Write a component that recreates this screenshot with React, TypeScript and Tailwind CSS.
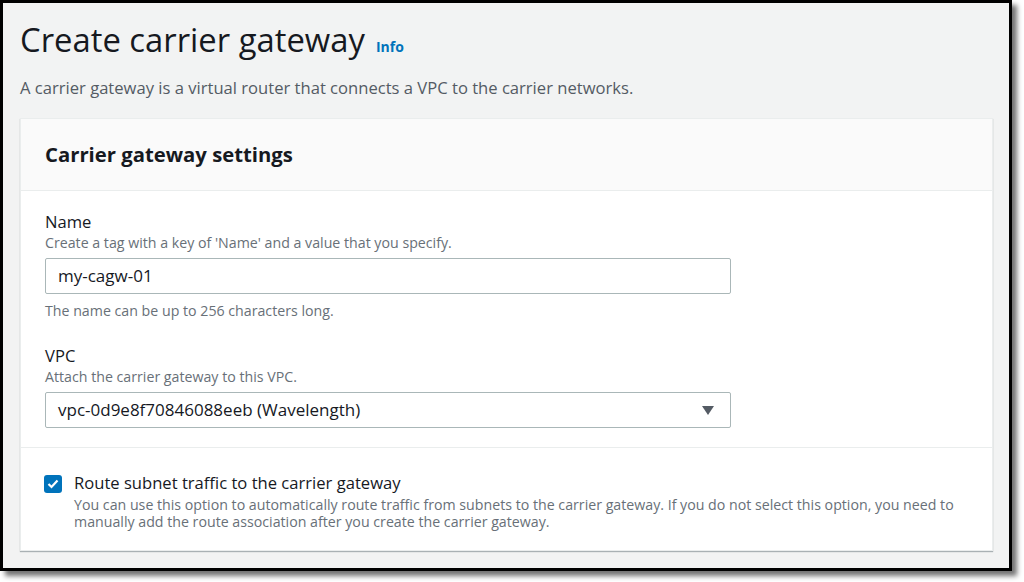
import React from "react";

export default function App() {
  return (
    <div className="w-[1024px] h-[582px] bg-white overflow-hidden" style={{ fontFamily: '"Open Sans", "Noto Sans", sans-serif' }}>
      <div className="w-[1012px] h-[571px] border-[3px] border-black bg-[#f2f3f3] shadow-[5px_5px_5px_rgba(0,0,0,0.55)] flex flex-col px-[17px] pt-[17px]">
        <div className="flex items-baseline gap-[11px]">
          <h1 className="text-[32.8px] leading-[40px] text-[#16191f] font-normal">Create carrier gateway</h1>
          <a className="text-[14px] font-bold text-[#0073bb]">Info</a>
        </div>
        <p className="mt-[17px] text-[16.6px] leading-[22px] text-[#545b64]">
          A carrier gateway is a virtual router that connects a VPC to the carrier networks.
        </p>
        <div className="mt-[19px] w-[973px] bg-white border border-[#eaeded] shadow-[0_1px_1px_0_rgba(0,28,36,0.3)] flex flex-col">
          <div className="h-[72px] bg-[#fafafa] border-b border-[#eaeded] flex items-center px-[24px]">
            <h2 className="text-[20.3px] font-bold text-[#16191f]">Carrier gateway settings</h2>
          </div>
          <div className="px-[24px] pt-[20px] pb-[19px] flex flex-col">
            <div className="text-[16.6px] leading-[22px] text-[#16191f]">Name</div>
            <div className="text-[14.2px] leading-[20px] text-[#687078]">Create a tag with a key of 'Name' and a value that you specify.</div>
            <div className="mt-[5px] w-[686px] h-[36px] border border-[#aab7b8] rounded-[2px] flex items-center px-[12px] text-[17px] text-[#16191f]">my-cagw-01</div>
            <div className="mt-[7px] text-[14.2px] leading-[20px] text-[#687078]">The name can be up to 256 characters long.</div>
            <div className="mt-[24px] text-[16.6px] leading-[22px] text-[#16191f]">VPC</div>
            <div className="text-[14.2px] leading-[20px] text-[#687078]">Attach the carrier gateway to this VPC.</div>
            <div className="mt-[5px] w-[686px] h-[36px] border border-[#aab7b8] rounded-[2px] flex items-center justify-between pl-[12px] pr-[16px] text-[17px] text-[#16191f]">
              <span>vpc-0d9e8f70846088eeb (Wavelength)</span>
              <svg width="12" height="9" viewBox="0 0 12 9"><path d="M0 0 H12 L6 9 Z" fill="#545b64" /></svg>
            </div>
          </div>
          <div className="border-t border-[#eaeded] px-[23px] pt-[24px] pb-[20px] flex gap-[12px]">
            <div className="mt-[3px] w-[18px] h-[18px] shrink-0 rounded-[3px] bg-[#0073bb] flex items-center justify-center">
              <svg width="12" height="10" viewBox="0 0 12 10"><path d="M1.5 5 L4.5 8 L10.5 1.5" fill="none" stroke="white" strokeWidth="2.2" /></svg>
            </div>
            <div className="flex flex-col">
              <div className="text-[16.6px] leading-[22px] text-[#16191f]">Route subnet traffic to the carrier gateway</div>
              <div className="mt-[2px] text-[14.2px] leading-[17px] text-[#687078]">You can use this option to automatically route traffic from subnets to the carrier gateway. If you do not select this option, you need to manually add the route association after you create the carrier gateway.</div>
            </div>
          </div>
        </div>
      </div>
    </div>
  );
}
